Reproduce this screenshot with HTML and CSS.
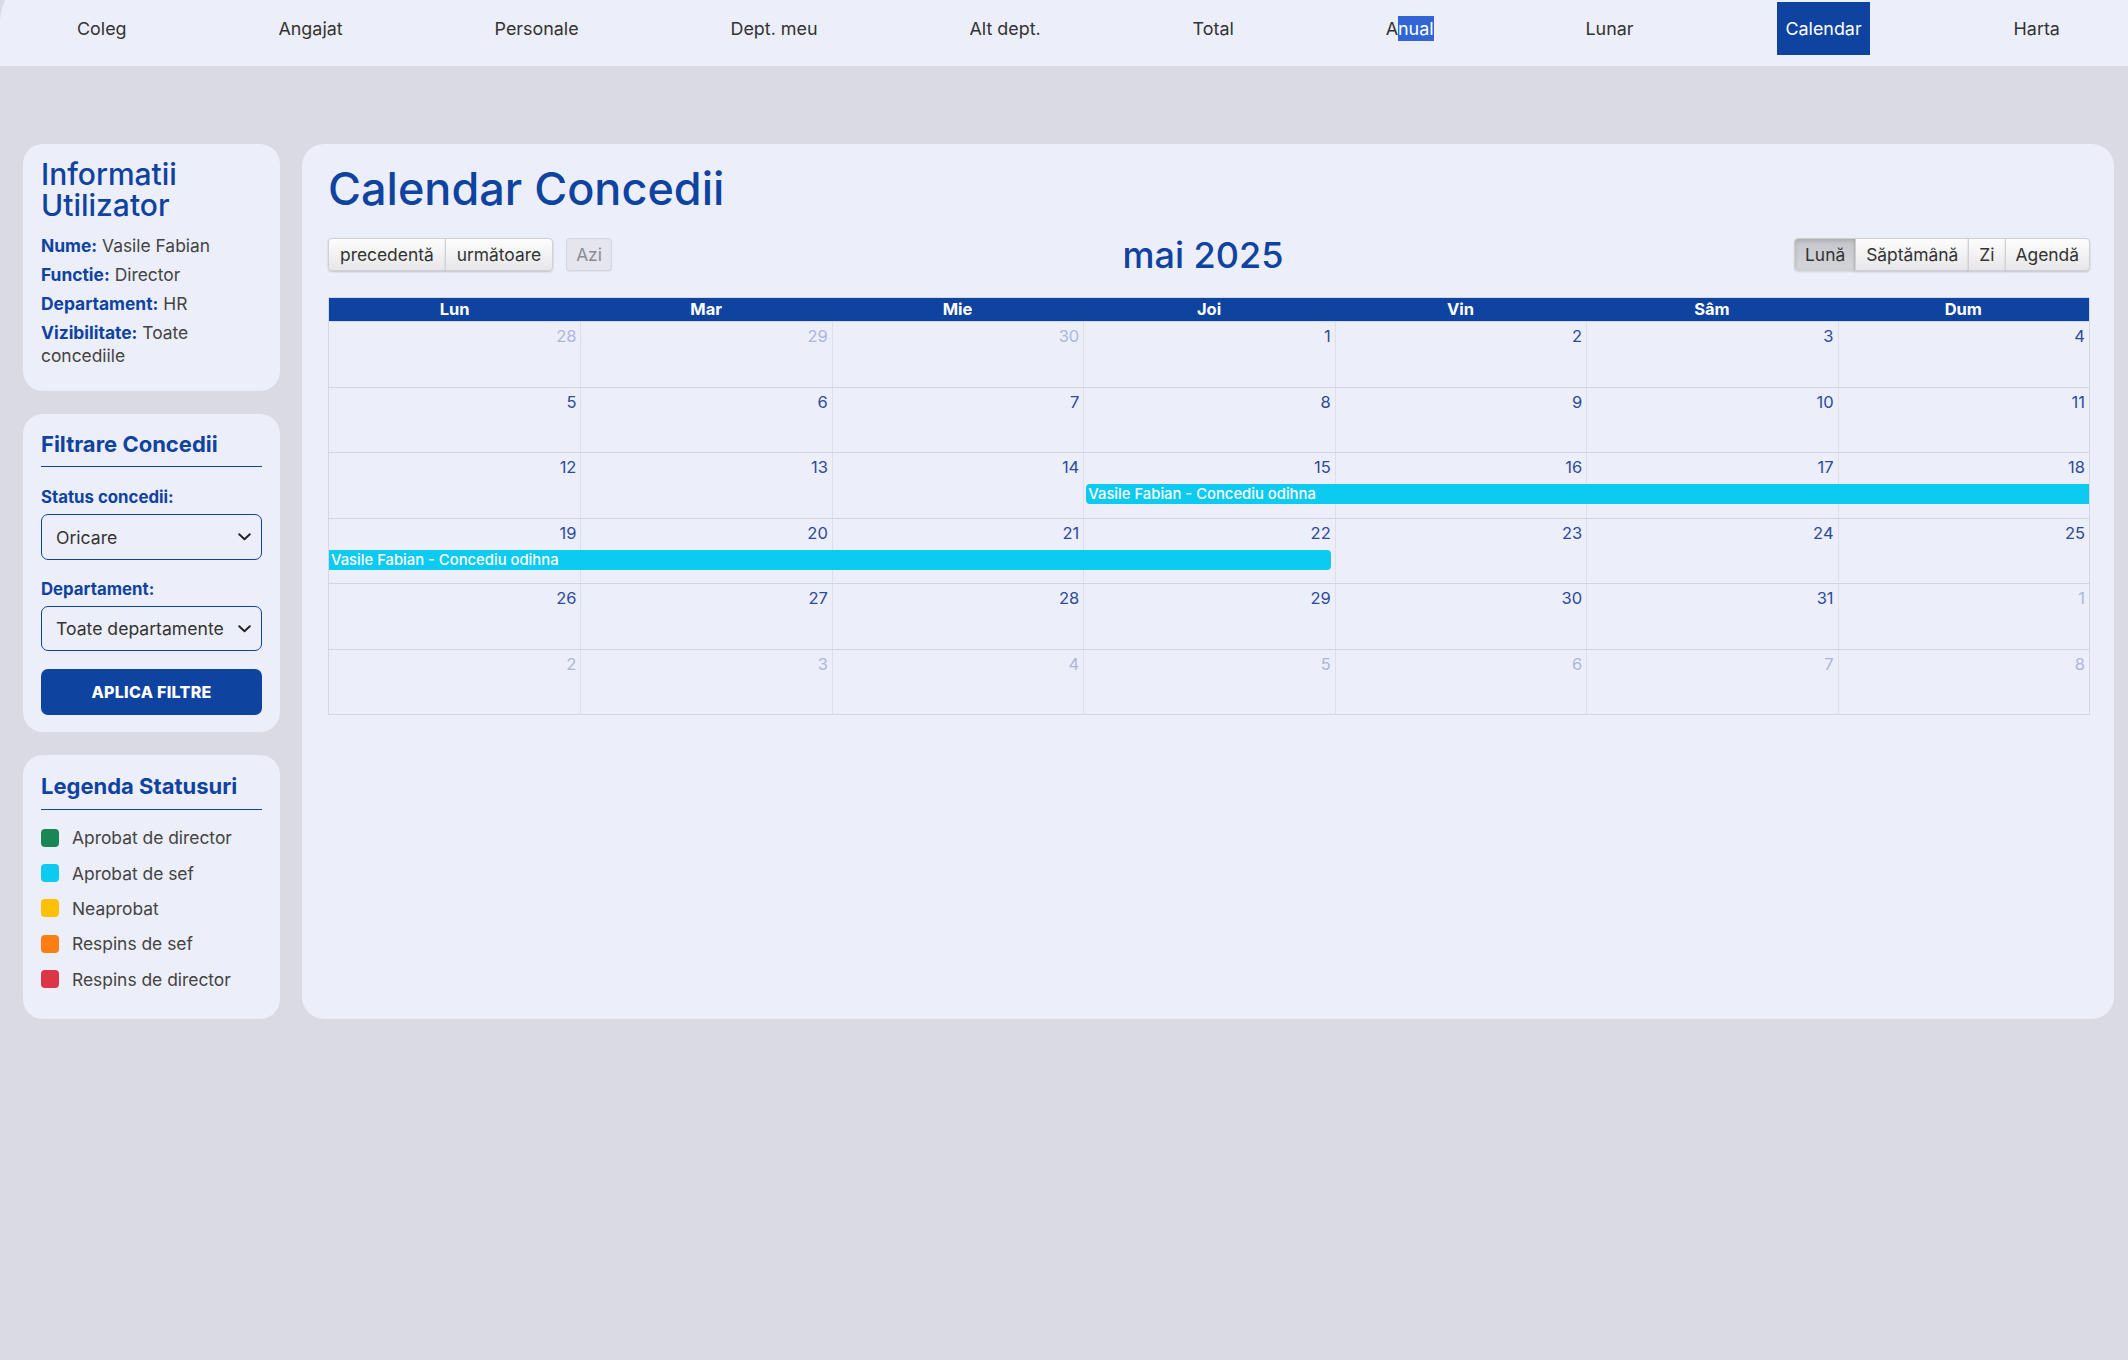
FILE: index.html
```html
<!DOCTYPE html>
<html lang="ro">
<head>
<meta charset="utf-8">
<title>Calendar Concedii</title>
<link rel="stylesheet" href="styles.css">
</head>
<body>
<nav class="topnav">
  <a class="nav-item">Coleg</a>
  <a class="nav-item">Angajat</a>
  <a class="nav-item">Personale</a>
  <a class="nav-item">Dept. meu</a>
  <a class="nav-item">Alt dept.</a>
  <a class="nav-item">Total</a>
  <a class="nav-item">A<span class="sel">nual</span></a>
  <a class="nav-item">Lunar</a>
  <a class="nav-item active">Calendar</a>
  <a class="nav-item">Harta</a>
</nav>

<div class="layout">
  <aside class="sidebar">
    <section class="card info">
      <h2>Informatii Utilizator</h2>
      <p><b>Nume:</b> Vasile Fabian</p>
      <p><b>Functie:</b> Director</p>
      <p><b>Departament:</b> HR</p>
      <p><b>Vizibilitate:</b> <span class="val">Toate</span><br><span class="val">concediile</span></p>
    </section>

    <section class="card filter">
      <h3>Filtrare Concedii</h3>
      <label class="lbl">Status concedii:</label>
      <div class="select"><span>Oricare</span><svg width="13" height="8" viewBox="0 0 13 8"><path d="M1.2 1.2 L6.5 6.3 L11.8 1.2" fill="none" stroke="#222" stroke-width="1.9" stroke-linecap="round" stroke-linejoin="round"/></svg></div>
      <label class="lbl">Departament:</label>
      <div class="select short"><span>Toate departamente</span><svg width="13" height="8" viewBox="0 0 13 8"><path d="M1.2 1.2 L6.5 6.3 L11.8 1.2" fill="none" stroke="#222" stroke-width="1.9" stroke-linecap="round" stroke-linejoin="round"/></svg></div>
      <button class="apply">APLICA FILTRE</button>
    </section>

    <section class="card legend">
      <h3>Legenda Statusuri</h3>
      <ul class="legend-list">
        <li><span class="sw green"></span>Aprobat de director</li>
        <li><span class="sw cyan"></span>Aprobat de sef</li>
        <li><span class="sw yellow"></span>Neaprobat</li>
        <li><span class="sw orange"></span>Respins de sef</li>
        <li><span class="sw red"></span>Respins de director</li>
      </ul>
    </section>
  </aside>

  <main class="card main">
    <h1>Calendar Concedii</h1>
    <div class="toolbar">
      <div class="tb-side">
        <div class="btn-group">
          <button class="btn">precedentă</button>
          <button class="btn">următoare</button>
        </div>
        <button class="btn disabled">Azi</button>
      </div>
      <div class="tb-label">mai 2025</div>
      <div class="btn-group views">
        <button class="btn active">Lună</button>
        <button class="btn">Săptămână</button>
        <button class="btn">Zi</button>
        <button class="btn">Agendă</button>
      </div>
    </div>

    <div class="month">
      <div class="month-head">
        <div>Lun</div><div>Mar</div><div>Mie</div><div>Joi</div><div>Vin</div><div>Sâm</div><div>Dum</div>
      </div>

      <div class="week">
        <div class="bg c1"></div><div class="bg c2"></div><div class="bg c3"></div><div class="bg c4"></div><div class="bg c5"></div><div class="bg c6"></div><div class="bg c7"></div>
        <div class="date c1 off">28</div><div class="date c2 off">29</div><div class="date c3 off">30</div><div class="date c4">1</div><div class="date c5">2</div><div class="date c6">3</div><div class="date c7">4</div>
      </div>

      <div class="week">
        <div class="bg c1"></div><div class="bg c2"></div><div class="bg c3"></div><div class="bg c4"></div><div class="bg c5"></div><div class="bg c6"></div><div class="bg c7"></div>
        <div class="date c1">5</div><div class="date c2">6</div><div class="date c3">7</div><div class="date c4">8</div><div class="date c5">9</div><div class="date c6">10</div><div class="date c7">11</div>
      </div>

      <div class="week">
        <div class="bg c1"></div><div class="bg c2"></div><div class="bg c3"></div><div class="bg c4"></div><div class="bg c5"></div><div class="bg c6"></div><div class="bg c7"></div>
        <div class="date c1">12</div><div class="date c2">13</div><div class="date c3">14</div><div class="date c4">15</div><div class="date c5">16</div><div class="date c6">17</div><div class="date c7">18</div>
        <div class="event span-thu-sun cont-after">Vasile Fabian - Concediu odihna</div>
      </div>

      <div class="week">
        <div class="bg c1"></div><div class="bg c2"></div><div class="bg c3"></div><div class="bg c4"></div><div class="bg c5"></div><div class="bg c6"></div><div class="bg c7"></div>
        <div class="date c1">19</div><div class="date c2">20</div><div class="date c3">21</div><div class="date c4">22</div><div class="date c5">23</div><div class="date c6">24</div><div class="date c7">25</div>
        <div class="event span-mon-thu cont-prior">Vasile Fabian - Concediu odihna</div>
      </div>

      <div class="week">
        <div class="bg c1"></div><div class="bg c2"></div><div class="bg c3"></div><div class="bg c4"></div><div class="bg c5"></div><div class="bg c6"></div><div class="bg c7"></div>
        <div class="date c1">26</div><div class="date c2">27</div><div class="date c3">28</div><div class="date c4">29</div><div class="date c5">30</div><div class="date c6">31</div><div class="date c7 off">1</div>
      </div>

      <div class="week">
        <div class="bg c1"></div><div class="bg c2"></div><div class="bg c3"></div><div class="bg c4"></div><div class="bg c5"></div><div class="bg c6"></div><div class="bg c7"></div>
        <div class="date c1 off">2</div><div class="date c2 off">3</div><div class="date c3 off">4</div><div class="date c4 off">5</div><div class="date c5 off">6</div><div class="date c6 off">7</div><div class="date c7 off">8</div>
      </div>
    </div>
  </main>
</div>
</body>
</html>
```

FILE: styles.css
```css
* { box-sizing: border-box; }

html, body {
  margin: 0;
  padding: 0;
}

body {
  background: #dadae4;
  font-family: Inter, "Noto Sans", sans-serif;
  color: #444;
  min-height: 100vh;
}

/* ---------- top navigation ---------- */
.topnav {
  display: flex;
  justify-content: space-between;
  align-items: flex-start;
  height: 98px;
  margin-top: -32px;
  padding: 34px 60px 0 69px;
  background: #eceef9;
  border-top-left-radius: 55px;
}

.nav-item {
  display: block;
  height: 53px;
  line-height: 53px;
  padding: 0 8px;
  font-size: 17.9px;
  color: #333;
  text-decoration: none;
}

.nav-item.active {
  background: #0f43a0;
  color: #fff;
}

.nav-item .sel {
  display: inline-block;
  line-height: 25px;
  background: #3165d4;
  color: #fff;
}

/* ---------- layout ---------- */
.layout {
  display: grid;
  grid-template-columns: 257px 1fr;
  gap: 22px;
  padding: 78px 14px 0 23px;
  align-items: stretch;
}

.sidebar {
  display: flex;
  flex-direction: column;
  gap: 23px;
}

.card {
  background: #eceef9;
  border-radius: 20px;
}

/* ---------- info card ---------- */
.info {
  padding: 15px 18px 18px;
}

.info h2 {
  margin: 0 0 13px;
  font-size: 30px;
  line-height: 31px;
  font-weight: 500;
  color: #0f43a0;
}

.info p {
  margin: 0 0 6px;
  font-size: 17.4px;
  line-height: 23px;
  color: #444;
}

.info b {
  color: #0f43a0;
  font-weight: 700;
}

/* ---------- filter card ---------- */
.filter {
  padding: 17px 18px 17px;
}

.filter h3,
.legend h3 {
  margin: 0;
  padding-bottom: 10px;
  border-bottom: 1px solid #0f43a0;
  font-size: 22px;
  line-height: 26px;
  font-weight: 700;
  color: #0f43a0;
}

.filter h3 {
  padding-bottom: 9px;
}

.lbl {
  display: block;
  margin: 19px 0 5px;
  font-size: 16.8px;
  line-height: 23px;
  font-weight: 700;
  color: #0f43a0;
}

.select + .lbl {
  margin-top: 18px;
}

.select {
  display: flex;
  align-items: center;
  justify-content: space-between;
  height: 46px;
  padding: 0 10px 0 14px;
  border: 1px solid #0f43a0;
  border-radius: 7px;
  font-size: 17.6px;
  color: #333;
}

.select.short {
  height: 45px;
}

.apply {
  display: block;
  width: 100%;
  height: 46px;
  margin-top: 18px;
  border: none;
  border-radius: 7px;
  background: #0f43a0;
  color: #fff;
  font-family: Inter, "Noto Sans", sans-serif;
  font-size: 16px;
  font-weight: 800;
  letter-spacing: 0.3px;
}

/* ---------- legend card ---------- */
.legend {
  padding: 18px 18px 22px;
}

.legend-list {
  list-style: none;
  margin: 10px 0 0;
  padding: 0;
}

.legend-list li {
  display: flex;
  align-items: center;
  gap: 13px;
  height: 35.4px;
  font-size: 17.4px;
  color: #444;
}

.sw {
  width: 18px;
  height: 18px;
  border-radius: 4px;
  flex: none;
}

.sw.green { background: #198754; }
.sw.cyan { background: #0dcaf0; }
.sw.yellow { background: #ffc107; }
.sw.orange { background: #fd7e14; }
.sw.red { background: #dc3545; }

/* ---------- main calendar card ---------- */
.main {
  padding: 19px 24px 24px 26px;
  border-radius: 22px;
}

.main h1 {
  margin: 0;
  font-size: 45px;
  line-height: 52px;
  font-weight: 500;
  color: #0f43a0;
}

.toolbar {
  display: flex;
  align-items: center;
  height: 41px;
  margin: 19px 0 22px;
}

.tb-side {
  display: flex;
  align-items: center;
  gap: 13px;
}

.tb-label {
  flex: 1;
  text-align: center;
  font-size: 36px;
  font-weight: 500;
  color: #0f43a0;
}

.btn-group {
  display: flex;
}

.btn {
  height: 33px;
  padding: 0 11px;
  border: 1px solid #cfcfd4;
  border-radius: 4px;
  background: linear-gradient(#fdfdfd, #e7e7ea);
  box-shadow: 0 1px 2px rgba(0, 0, 0, 0.18);
  font-family: Inter, "Noto Sans", sans-serif;
  font-size: 17.4px;
  color: #333;
}

.views .btn {
  padding: 0 10px;
}

.btn-group .btn {
  border-radius: 0;
}

.btn-group .btn + .btn {
  margin-left: -1px;
}

.btn-group .btn:first-child {
  border-radius: 4px 0 0 4px;
}

.btn-group .btn:last-child {
  border-radius: 0 4px 4px 0;
}

.btn.active {
  background: linear-gradient(#c6c7cc, #d4d5d9);
  box-shadow: inset 0 2px 4px rgba(0, 0, 0, 0.15), 0 1px 2px rgba(0, 0, 0, 0.12);
}

.btn.disabled {
  padding: 0 9px;
  background: #e4e5ee;
  border-color: #d4d5de;
  box-shadow: 0 1px 1px rgba(0, 0, 0, 0.06);
  color: #8b8b92;
}

/* ---------- month grid ---------- */
.month {
  border: 1px solid #d6d7e2;
}

.month-head {
  display: grid;
  grid-template-columns: repeat(7, 1fr);
  height: 23px;
  background: #0f43a0;
}

.month-head div {
  text-align: center;
  font-size: 16.5px;
  line-height: 23px;
  font-weight: 700;
  color: #fff;
}

.week {
  display: grid;
  grid-template-columns: repeat(7, 1fr);
  grid-template-rows: 31px 20px 1fr;
  height: 65.5px;
  border-top: 1px solid #d4d5e0;
}

.bg {
  grid-row: 1 / -1;
  border-left: 1px solid #dedfe9;
}

.bg.c1 { border-left: none; }

.c1 { grid-column: 1; }
.c2 { grid-column: 2; }
.c3 { grid-column: 3; }
.c4 { grid-column: 4; }
.c5 { grid-column: 5; }
.c6 { grid-column: 6; }
.c7 { grid-column: 7; }

.date {
  grid-row: 1;
  padding: 4px 4px 0 0;
  text-align: right;
  font-size: 16.5px;
  line-height: 20px;
  color: #2c4b9b;
}

.date.off {
  color: #adb6dd;
}

.event {
  grid-row: 2;
  z-index: 1;
  padding: 0 2px;
  background: #0dcaf0;
  color: #fff;
  font-size: 14.8px;
  font-weight: 500;
  line-height: 20px;
  border-radius: 4px;
  white-space: nowrap;
  overflow: hidden;
}

.span-thu-sun { grid-column: 4 / 8; }
.span-mon-thu { grid-column: 1 / 5; }

.cont-after {
  margin-left: 3px;
  border-top-right-radius: 0;
  border-bottom-right-radius: 0;
}

.cont-prior {
  margin-right: 4px;
  border-top-left-radius: 0;
  border-bottom-left-radius: 0;
}
```
